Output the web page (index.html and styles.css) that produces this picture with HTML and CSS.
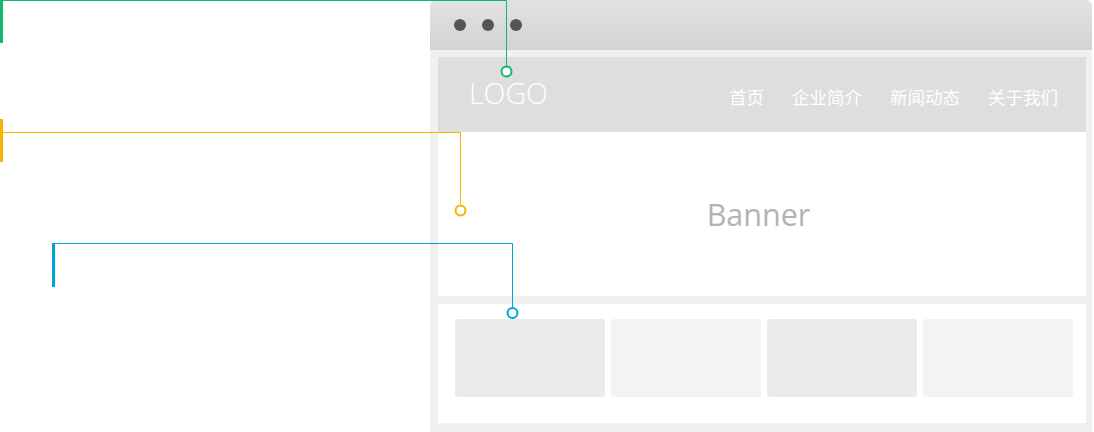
FILE: index.html
```html
<!DOCTYPE html>
<html lang="zh-CN">
<head>
<meta charset="utf-8">
<title>Layout</title>
<link rel="stylesheet" href="styles.css">
</head>
<body>
<div class="stage">
  <div class="window">
    <div class="titlebar">
      <span class="dot"></span><span class="dot"></span><span class="dot"></span>
    </div>
    <div class="inner">
      <header class="header">
        <div class="logo">LOGO</div>
        <nav class="nav">
          <span>首页</span>
          <span>企业简介</span>
          <span>新闻动态</span>
          <span>关于我们</span>
        </nav>
      </header>
      <section class="banner">Banner</section>
      <section class="panel">
        <div class="card dark"></div>
        <div class="card light"></div>
        <div class="card dark"></div>
        <div class="card light"></div>
      </section>
    </div>
  </div>
  <svg class="overlay" width="1094" height="432" viewBox="0 0 1094 432">
    <g fill="none" stroke-width="1">
      <path d="M3 0.5 H506.5 V66" stroke="#12b76d"/>
      <path d="M3 132.5 H460.5 V204.5" stroke="#f5b400"/>
      <path d="M55 243.5 H512.5 V307.5" stroke="#00a2dd"/>
    </g>
    <rect x="0" y="0" width="3" height="43" fill="#12b76d"/>
    <rect x="0" y="119" width="3" height="43" fill="#f5b400"/>
    <rect x="52" y="243" width="3" height="44" fill="#00a2dd"/>
    <circle cx="506.5" cy="71.5" r="5" fill="#fff" stroke="#12b76d" stroke-width="2"/>
    <circle cx="460.5" cy="210.5" r="5" fill="#fff" stroke="#f5b400" stroke-width="2"/>
    <circle cx="512.5" cy="313" r="5" fill="#fff" stroke="#00a2dd" stroke-width="2"/>
  </svg>
</div>
</body>
</html>
```

FILE: styles.css
```css
html, body {
  margin: 0;
  padding: 0;
  background: #fff;
}
.stage {
  position: relative;
  width: 1094px;
  height: 432px;
  overflow: hidden;
}
.window {
  margin-left: 430px;
  width: 662px;
  height: 440px;
  background: #f0f0f0;
  border-radius: 6px 6px 0 0;
  overflow: hidden;
}
.titlebar {
  height: 50px;
  background: linear-gradient(#e2e2e2, #d3d3d3);
  display: flex;
  align-items: center;
  gap: 16px;
  padding-left: 24px;
  box-sizing: border-box;
}
.dot {
  width: 12px;
  height: 12px;
  border-radius: 50%;
  background: #555;
}
.inner {
  padding: 7px 6px 0 8px;
  display: flex;
  flex-direction: column;
}
.header {
  height: 75px;
  background: #dedede;
  display: flex;
  align-items: center;
  justify-content: space-between;
  padding: 0 28px 0 31px;
}
.logo {
  font-family: "Open Sans", sans-serif;
  font-weight: 300;
  font-size: 28.5px;
  color: #fff;
  line-height: 1;
  margin-top: -2px;
}
.nav {
  display: flex;
  gap: 28px;
  font-family: "Noto Sans CJK SC", sans-serif;
  font-weight: 400;
  font-size: 17.5px;
  color: #fff;
  line-height: 1;
  margin-top: 4px;
}
.banner {
  height: 164px;
  background: #fff;
  display: flex;
  align-items: center;
  justify-content: center;
  font-family: "Open Sans", sans-serif;
  font-size: 30.5px;
  color: #b3b3b3;
  margin-bottom: 8px;
  padding-right: 7px;
}
.panel {
  height: 119px;
  background: #fff;
  display: flex;
  gap: 6px;
  padding: 15px 13px 0 17px;
  box-sizing: border-box;
}
.card {
  width: 150px;
  height: 78px;
  border-radius: 3px;
}
.card.dark { background: #ebebeb; }
.card.light { background: #f3f3f3; }
.overlay {
  position: absolute;
  left: 0;
  top: 0;
}
```
